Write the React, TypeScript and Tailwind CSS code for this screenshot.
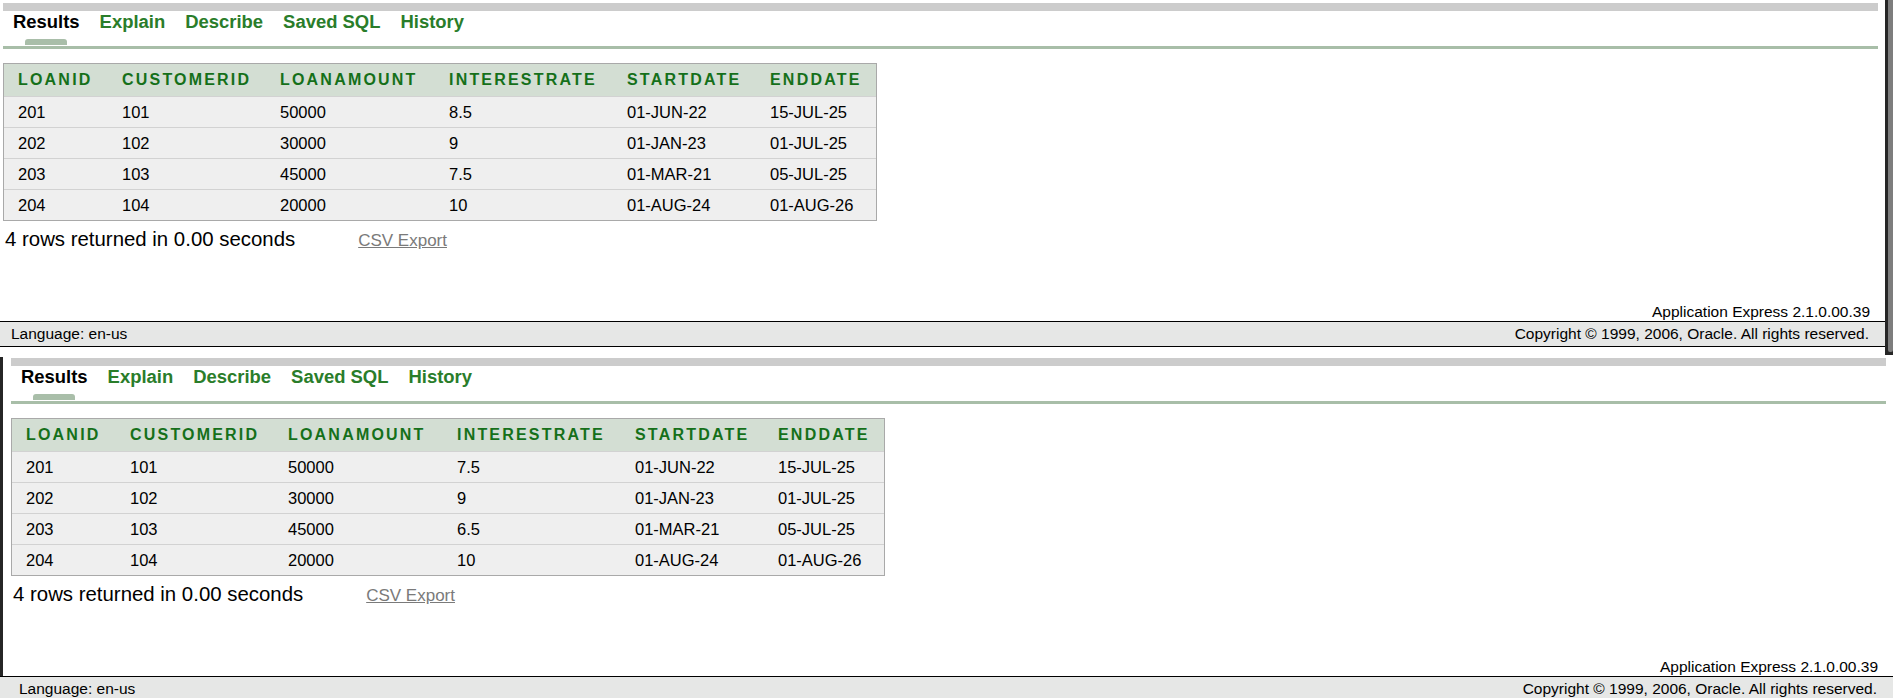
import React from 'react'

const columns = [
  'LOANID',
  'CUSTOMERID',
  'LOANAMOUNT',
  'INTERESTRATE',
  'STARTDATE',
  'ENDDATE',
]

type Row = [string, string, string, string, string, string]

const tabs = ['Results', 'Explain', 'Describe', 'Saved SQL', 'History']

function makeRows(rates: string[]): Row[] {
  return [
    ['201', '101', '50000', rates[0], '01-JUN-22', '15-JUL-25'],
    ['202', '102', '30000', rates[1], '01-JAN-23', '01-JUL-25'],
    ['203', '103', '45000', rates[2], '01-MAR-21', '05-JUL-25'],
    ['204', '104', '20000', rates[3], '01-AUG-24', '01-AUG-26'],
  ]
}

function ResultsPane({ rows }: { rows: Row[] }) {
  return (
    <div className="w-[1885px] h-[321px] flex flex-col pt-[3px]">
      <div className="ml-[3px] w-[1875px] h-[8px] bg-[#cccccc]" />

      {/* tabs */}
      <div className="ml-[3px] flex items-start pt-[1px]">
        {tabs.map((t, i) => (
          <div key={t} className="flex flex-col px-[10px]">
            <span
              className={`text-[18.45px] leading-[20px] font-bold ${
                i === 0 ? 'text-black' : 'text-[#2a7d2a]'
              }`}
            >
              {t}
            </span>
            {i === 0 ? (
              <div className="mx-auto mt-[7px] mb-[1px] w-[42px] h-[6px] rounded-t-[3px] bg-[#a9bea9]" />
            ) : (
              <div className="mt-[7px] mb-[1px] h-[6px]" />
            )}
          </div>
        ))}
      </div>
      <div className="ml-[3px] w-[1875px] h-[3px] bg-[#a8bea8]" />

      {/* table */}
      <div className="ml-[3px] mt-[14px] w-[874px] border border-[#a9a9a9] bg-[#efefef]">
        <div className="grid grid-cols-[104px_158px_169px_178px_143px_120px] h-[32px] bg-[#d3ded3] items-center">
          {columns.map((c) => (
            <div
              key={c}
              className="pl-[14px] text-[16px] font-bold tracking-[2.2px] text-[#15701a] leading-none"
            >
              {c}
            </div>
          ))}
        </div>
        {rows.map((r) => (
          <div
            key={r[0]}
            className="grid grid-cols-[104px_158px_169px_178px_143px_120px] h-[31px] border-t border-[#d2d2d2] items-center"
          >
            {r.map((v, j) => (
              <div key={j} className="pl-[14px] text-[16.5px] text-black leading-none">
                {v}
              </div>
            ))}
          </div>
        ))}
      </div>

      <div className="flex items-baseline pl-[5px] mt-[7px]">
        <span className="text-[20.4px] leading-[23px] text-black">4 rows returned in 0.00 seconds</span>
        <a className="ml-[63px] text-[17px] leading-[20px] text-[#7a7a7a] underline">CSV Export</a>
      </div>

      <div className="mt-auto pr-[15px] text-right text-[15.5px] leading-[18px] text-black">
        Application Express 2.1.0.00.39
      </div>
    </div>
  )
}

function Footer({ className }: { className: string }) {
  return (
    <div
      className={`h-[26px] flex items-center justify-between border-y border-black bg-[#e6e7e6] text-[15.5px] text-black ${className}`}
    >
      <span>Language: en-us</span>
      <span>Copyright © 1999, 2006, Oracle. All rights reserved.</span>
    </div>
  )
}

export default function App() {
  return (
    <div
      className="w-[1893px] h-[698px] overflow-hidden bg-white"
      style={{ fontFamily: '"Liberation Sans", Arial, sans-serif' }}
    >
      {/* first capture */}
      <div className="flex h-[355px]">
        <div className="w-[1885px] flex flex-col">
          <ResultsPane rows={makeRows(['8.5', '9', '7.5', '10'])} />
          <Footer className="pl-[11px] pr-[16px]" />
        </div>
        <div className="w-[8px] h-full flex bg-[#262626]">
          <div className="ml-[3px] w-[5px] h-[352px] rounded-b-[2px] bg-[#7d7d7d]" />
        </div>
      </div>

      {/* second capture */}
      <div className="flex flex-col">
        <div className="flex h-[321px]">
          <div className="mt-[2px] w-[3px] bg-[#262626]" />
          <div className="pl-[5px]">
            <ResultsPane rows={makeRows(['7.5', '9', '6.5', '10'])} />
          </div>
        </div>
        <Footer className="pl-[19px] pr-[16px]" />
      </div>
    </div>
  )
}
